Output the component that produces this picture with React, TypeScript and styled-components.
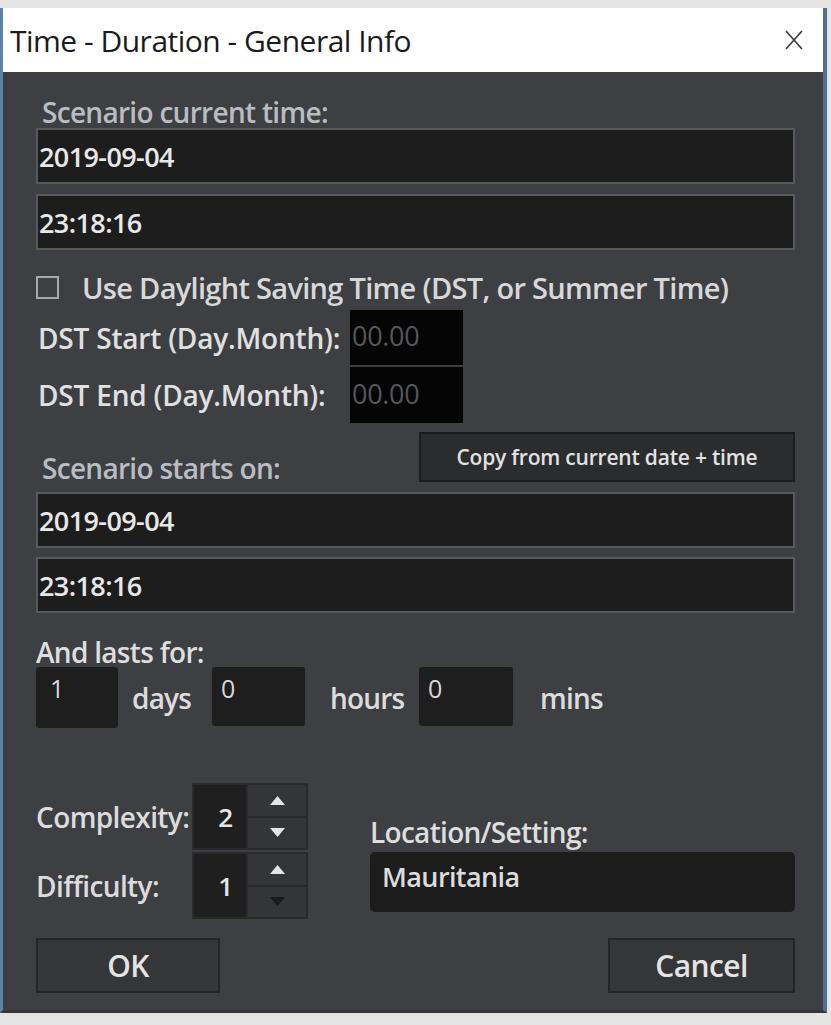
import React from 'react'
import styled, { createGlobalStyle } from 'styled-components'

const GlobalStyle = createGlobalStyle`
    html, body {
        margin: 0;
        padding: 0;
        background: #e4e4e4;
    }
    body {
        font-family: 'Open Sans', 'Liberation Sans', sans-serif;
    }
`

const Screen = styled.div`
    width: 831px;
    height: 1025px;
    padding-top: 8px;
    box-sizing: border-box;
    background: #e4e4e4;
    overflow: hidden;
`

const Window = styled.div`
    width: 827px;
    border-left: 3px solid #5d82a8;
    border-right: 4px solid #4f6f8f;
    border-bottom: 3px solid #34363a;
    box-sizing: border-box;
    display: flex;
    flex-direction: column;
`

const TitleBar = styled.div`
    height: 64px;
    background: #fff;
    display: flex;
    align-items: center;
    justify-content: space-between;
    padding: 0 20px 0 7px;
    font-size: 30px;
    color: #1b1b1b;
    letter-spacing: -0.5px;
`

const Body = styled.div`
    background: #3d3f43;
    height: 938px;
    padding: 0 28px 0 33px;
    box-sizing: border-box;
    display: flex;
    flex-direction: column;
    color: #dcdcdc;
    font-weight: 600;
`

const Label = styled.div<{ $top?: number; $indent?: number; $dim?: boolean }>`
    margin-top: ${p => p.$top ?? 0}px;
    padding-left: ${p => p.$indent ?? 0}px;
    height: 28px;
    line-height: 28px;
    font-size: 28px;
    letter-spacing: -0.7px;
    color: ${p => (p.$dim ? '#b9bdc2' : '#dedede')};
    white-space: nowrap;
`

const Field = styled.div<{ $top?: number }>`
    margin-top: ${p => p.$top ?? 0}px;
    height: 56px;
    box-sizing: border-box;
    border: 2px solid #57595d;
    background: #1d1d1e;
    display: flex;
    align-items: center;
    padding-left: 1px;
    font-size: 27px;
    letter-spacing: -0.6px;
    color: #e8e8e8;
`

const CheckRow = styled.label`
    margin-top: 22px;
    height: 30px;
    display: flex;
    align-items: center;
    gap: 23px;
    font-size: 29px;
    letter-spacing: -0.7px;
    color: #d8d8d8;
    white-space: nowrap;
`

const CheckBox = styled.span`
    width: 23px;
    height: 23px;
    flex-shrink: 0;
    box-sizing: border-box;
    border: 2px solid #a7a9ac;
`

const DstRow = styled.div<{ $top: number; $height: number }>`
    margin-top: ${p => p.$top}px;
    height: ${p => p.$height}px;
    display: flex;
    align-items: stretch;
`

const DstLabel = styled.div`
    width: 312px;
    padding-left: 2px;
    display: flex;
    align-items: center;
    font-size: 28px;
    letter-spacing: -0.2px;
    color: #e0e0e0;
    white-space: nowrap;
`

const DstBox = styled.div`
    width: 113px;
    background: #050505;
    display: flex;
    align-items: center;
    padding: 0 0 4px 2px;
    box-sizing: border-box;
    font-size: 27px;
    font-weight: 400;
    letter-spacing: -0.3px;
    color: #55575a;
`

const StartRow = styled.div`
    margin-top: 9px;
    height: 50px;
    display: flex;
    align-items: flex-end;
    justify-content: space-between;
`

const CopyButton = styled.button`
    width: 376px;
    height: 50px;
    background: #2b2c2e;
    border: 2px solid #1c1c1d;
    color: #e2e2e2;
    font-family: 'Open Sans', 'Liberation Sans', sans-serif;
    font-weight: 600;
    font-size: 21px;
    letter-spacing: -0.2px;
    padding: 0;
`

const DurationRow = styled.div`
    margin-top: 1px;
    height: 61px;
    display: flex;
    align-items: flex-start;
`

const NumBox = styled.div<{ $width: number; $height: number }>`
    width: ${p => p.$width}px;
    height: ${p => p.$height}px;
    background: #1e1e1f;
    border-radius: 3px;
    box-sizing: border-box;
    padding: 4px 0 0 ${p => (p.$width < 90 ? 14 : 9)}px;
    font-size: 25px;
    font-weight: 400;
    color: #d6d8dc;
`

const Unit = styled.div<{ $width?: number; $pad: number }>`
    width: ${p => (p.$width ? `${p.$width}px` : 'auto')};
    padding-left: ${p => p.$pad}px;
    box-sizing: border-box;
    height: 61px;
    display: flex;
    align-items: center;
    font-size: 28px;
    letter-spacing: -0.8px;
    color: #dcdcdc;
`

const Bottom = styled.div`
    margin-top: 55px;
    display: flex;
    gap: 62px;
`

const SpinColumn = styled.div`
    width: 272px;
    display: flex;
    flex-direction: column;
    gap: 2px;
`

const SpinRow = styled.div`
    height: 67px;
    display: flex;
`

const SpinLabel = styled.div`
    width: 156px;
    display: flex;
    align-items: center;
    font-size: 28px;
    letter-spacing: -0.6px;
    color: #dcdcdc;
    white-space: nowrap;
`

const Spin = styled.div`
    width: 116px;
    display: flex;
    gap: 2px;
    background: #2a2a2c;
    padding: 2px;
    box-sizing: border-box;
`

const SpinValue = styled.div`
    width: 52px;
    background: #1f1f20;
    display: flex;
    align-items: center;
    justify-content: flex-end;
    padding-right: 13px;
    box-sizing: border-box;
    font-size: 26px;
    color: #e6e6e6;
`

const SpinArrows = styled.div`
    flex: 1;
    display: flex;
    flex-direction: column;
    gap: 2px;
`

const ArrowButton = styled.div<{ $muted?: boolean }>`
    flex: 1;
    background: #343537;
    display: flex;
    align-items: center;
    justify-content: center;
    color: ${p => (p.$muted ? '#1a1a1a' : '#e4e4e4')};
`

const LocationColumn = styled.div`
    flex: 1;
    display: flex;
    flex-direction: column;
    padding-top: 35px;
`

const LocationField = styled.div`
    margin-top: 6px;
    height: 60px;
    background: #1d1d1e;
    border-radius: 5px;
    padding: 6px 0 0 12px;
    box-sizing: border-box;
    font-size: 27px;
    letter-spacing: -0.6px;
    color: #dcdcdc;
`

const Actions = styled.div`
    margin-top: 19px;
    display: flex;
    justify-content: space-between;
`

const ActionButton = styled.button<{ $width: number }>`
    width: ${p => p.$width}px;
    height: 55px;
    background: #353638;
    border: 2px solid #242526;
    color: #e4e4e4;
    font-family: 'Open Sans', 'Liberation Sans', sans-serif;
    font-weight: 600;
    font-size: 30px;
    letter-spacing: -0.6px;
    padding: 0;
`

const Arrow: React.FC<{ down?: boolean }> = ({ down }) => (
    <svg width="15" height="9" viewBox="0 0 15 9">
        <polygon points={down ? '0,0 15,0 7.5,9' : '7.5,0 15,9 0,9'} fill="currentColor" />
    </svg>
)

const CloseIcon: React.FC = () => (
    <svg width="18" height="20" viewBox="0 0 18 20">
        <path d="M1 1 L17 19 M17 1 L1 19" stroke="#3a3a3a" strokeWidth="1.6" />
    </svg>
)

const App: React.FC = () => {
    return (
        <Screen>
            <GlobalStyle />
            <Window>
                <TitleBar>
                    <span>Time - Duration - General Info</span>
                    <CloseIcon />
                </TitleBar>
                <Body>
                    <Label $top={26} $indent={6} $dim>Scenario current time:</Label>
                    <Field $top={2}>2019-09-04</Field>
                    <Field $top={10}>23:18:16</Field>

                    <CheckRow>
                        <CheckBox />
                        Use Daylight Saving Time (DST, or Summer Time)
                    </CheckRow>
                    <DstRow $top={8} $height={55}>
                        <DstLabel>DST Start (Day.Month):</DstLabel>
                        <DstBox>00.00</DstBox>
                    </DstRow>
                    <DstRow $top={2} $height={56}>
                        <DstLabel>DST End (Day.Month):</DstLabel>
                        <DstBox>00.00</DstBox>
                    </DstRow>

                    <StartRow>
                        <Label $indent={6} $dim>Scenario starts on:</Label>
                        <CopyButton>Copy from current date + time</CopyButton>
                    </StartRow>
                    <Field $top={10}>2019-09-04</Field>
                    <Field $top={9}>23:18:16</Field>

                    <Label $top={25}>And lasts for:</Label>
                    <DurationRow>
                        <NumBox $width={82} $height={61}>1</NumBox>
                        <Unit $width={94} $pad={14}>days</Unit>
                        <NumBox $width={93} $height={59}>0</NumBox>
                        <Unit $width={114} $pad={25}>hours</Unit>
                        <NumBox $width={94} $height={59}>0</NumBox>
                        <Unit $pad={27}>mins</Unit>
                    </DurationRow>

                    <Bottom>
                        <SpinColumn>
                            <SpinRow>
                                <SpinLabel>Complexity:</SpinLabel>
                                <Spin>
                                    <SpinValue>2</SpinValue>
                                    <SpinArrows>
                                        <ArrowButton><Arrow /></ArrowButton>
                                        <ArrowButton><Arrow down /></ArrowButton>
                                    </SpinArrows>
                                </Spin>
                            </SpinRow>
                            <SpinRow>
                                <SpinLabel>Difficulty:</SpinLabel>
                                <Spin>
                                    <SpinValue>1</SpinValue>
                                    <SpinArrows>
                                        <ArrowButton><Arrow /></ArrowButton>
                                        <ArrowButton $muted><Arrow down /></ArrowButton>
                                    </SpinArrows>
                                </Spin>
                            </SpinRow>
                        </SpinColumn>
                        <LocationColumn>
                            <Label>Location/Setting:</Label>
                            <LocationField>Mauritania</LocationField>
                        </LocationColumn>
                    </Bottom>

                    <Actions>
                        <ActionButton $width={184}>OK</ActionButton>
                        <ActionButton $width={187}>Cancel</ActionButton>
                    </Actions>
                </Body>
            </Window>
        </Screen>
    )
}

export default App
